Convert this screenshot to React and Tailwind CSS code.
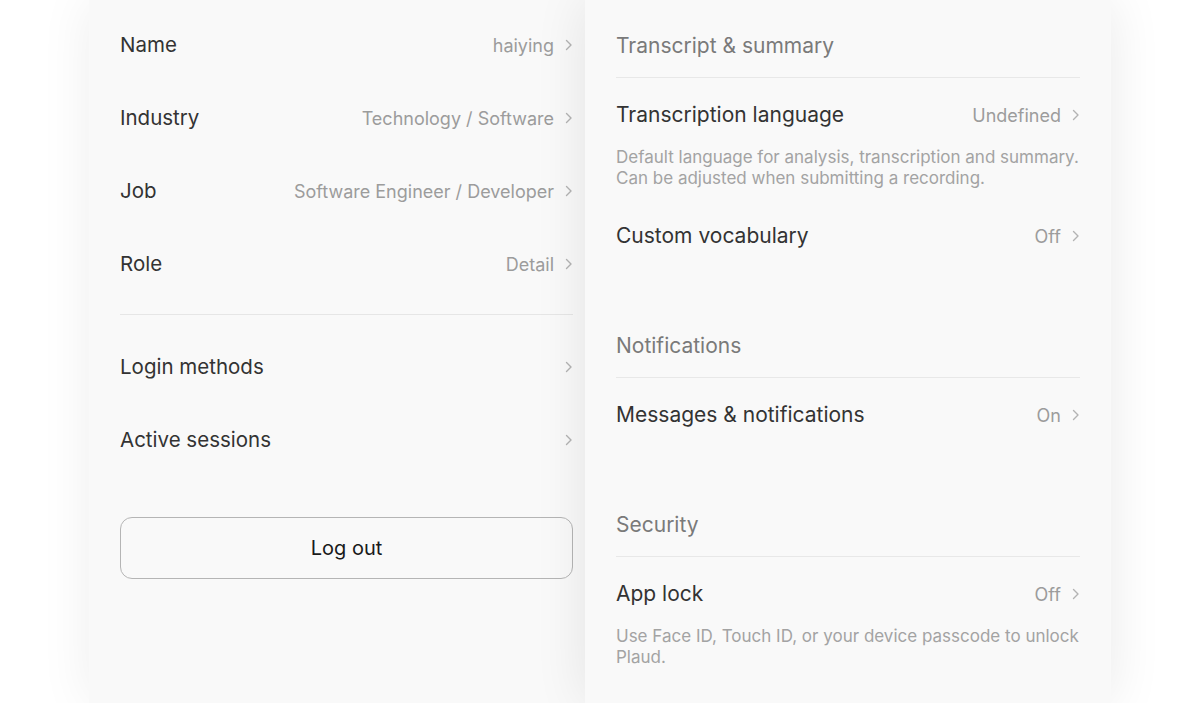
import React from "react";

const Chevron = () => (
  <svg width="8" height="12" viewBox="0 0 8 12" className="shrink-0" fill="none">
    <path d="M1.5 1.5 L6 6 L1.5 10.5" stroke="#b3b3b3" strokeWidth="1.4" strokeLinecap="round" strokeLinejoin="round" />
  </svg>
);

const Row = ({ label, value, className = "", labelSize = "text-[21px]" }) => (
  <div className={`flex items-center justify-between ${className}`}>
    <span className={`${labelSize} text-[#333333]`}>{label}</span>
    <div className="flex items-center gap-[11px]">
      {value && <span className="text-[18px] text-[#9c9c9c]">{value}</span>}
      <Chevron />
    </div>
  </div>
);

const SectionHeader = ({ children, className = "" }) => (
  <div className={`border-b border-[#e8e8e8] ${className}`}>
    <div className="text-[21px] text-[#7a7a7a] leading-[28px] pb-[17px]">{children}</div>
  </div>
);

const L = "text-[20.5px]";

export default function App() {
  return (
    <div
      className="w-[1200px] h-[703px] bg-white overflow-hidden flex"
      style={{ fontFamily: "Inter, 'Noto Sans', sans-serif" }}
    >
      <div className="ml-[89px] w-[496px] h-full bg-[#f9f9f9] shadow-[0_0_50px_rgba(0,0,0,0.07)] pl-[31px] pr-[12px] pt-[31px]">
        <div className="flex flex-col">
          <Row labelSize={L} label="Name" value="haiying" className="h-[28px]" />
          <Row labelSize={L} label="Industry" value="Technology / Software" className="h-[28px] mt-[45px]" />
          <Row labelSize={L} label="Job" value="Software Engineer / Developer" className="h-[28px] mt-[45px]" />
          <Row labelSize={L} label="Role" value="Detail" className="h-[28px] mt-[45px]" />
          <div className="border-t border-[#e6e6e6] mt-[36px]" />
          <Row labelSize={L} label="Login methods" className="h-[28px] mt-[38px]" />
          <Row labelSize={L} label="Active sessions" className="h-[28px] mt-[45px]" />
          <button className="mt-[63px] h-[62px] w-full rounded-[12px] border border-[#b5b5b5] text-[20px] text-[#1a1a1a] bg-[#f9f9f9]">
            Log out
          </button>
        </div>
      </div>
      <div className="relative z-10 w-[526px] h-full bg-[#f9f9f9] shadow-[0_0_50px_rgba(0,0,0,0.09)] px-[31px] pt-[32px]">
        <SectionHeader>Transcript &amp; summary</SectionHeader>
        <Row label="Transcription language" value="Undefined" className="h-[28px] mt-[23px]" />
        <p className="mt-[18px] text-[17px] leading-[21px] text-[#a3a3a3]">
          Default language for analysis, transcription and summary. Can be adjusted when submitting a recording.
        </p>
        <Row label="Custom vocabulary" value="Off" className="h-[28px] mt-[33px]" />
        <SectionHeader className="mt-[82px]">Notifications</SectionHeader>
        <Row label="Messages & notifications" value="On" className="h-[28px] mt-[23px]" />
        <SectionHeader className="mt-[82px]">Security</SectionHeader>
        <Row label="App lock" value="Off" className="h-[28px] mt-[23px]" />
        <p className="mt-[18px] text-[17px] leading-[21px] text-[#a3a3a3]">
          Use Face ID, Touch ID, or your device passcode to unlock Plaud.
        </p>
      </div>
    </div>
  );
}
